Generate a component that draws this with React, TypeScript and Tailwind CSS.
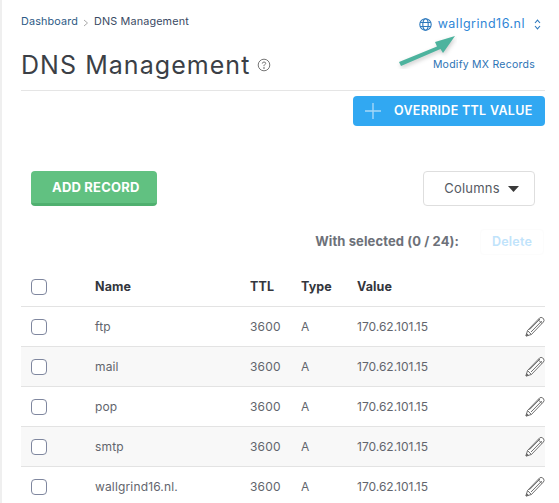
const FONT = "font-['Inter','Noto_Sans',sans-serif]";

function Pencil() {
  return (
    <svg width="20" height="21" viewBox="0 0 20 21" fill="none" stroke="#6e6e6e" strokeWidth="1" strokeLinejoin="round">
      <path d="M1 20 L2.5 14.5 L14.5 2 Q16 0.8 17.8 2 L18.6 2.9 Q19.7 4.6 18.4 6 L6.4 18.5 Z" fill="#fff" />
      <path d="M2.5 14.5 L6.4 18.5 M13 3.6 L17 7.5 M4.4 13.8 L15 3 M6 16 L16.8 5 M1.6 17.6 L3.4 19.4" />
      <path d="M1 20 L1.6 17.6 L3.4 19.4 Z" fill="#555" />
    </svg>
  );
}

function Check() {
  return <span className="block w-4 h-4 rounded-[4px] border border-[#7f879f] bg-white" />;
}

const ROWS = ["ftp", "mail", "pop", "smtp", "wallgrind16.nl."];
const GRID = "grid grid-cols-[64px_155px_51px_56px_1fr_20px] items-center pl-[10px]";

export default function App() {
  return (
    <div className={`${FONT} relative w-[559px] h-[503px] overflow-hidden bg-white`}>
      <div className="absolute left-0 top-0 bottom-0 w-[2px] bg-[#efefef]" />
      <div className="w-[524px] ml-[21px]">
        <div className="flex items-start justify-between h-[90px] border-b-0">
          <div className="pt-[15px]">
            <div className="flex items-center h-[14px] text-[10.8px] tracking-[0.15px] text-[#3a4a63]">
              <span className="text-[#2c5a85]">Dashboard</span>
              <svg width="6" height="8" viewBox="0 0 6 8" className="mx-[5px] mt-[2px]" fill="none" stroke="#aaa"><path d="M1 1 L4.5 4 L1 7" /></svg>
              <span>DNS Management</span>
            </div>
            <div className="flex items-center mt-[14px] h-[44px]">
              <h1 className="text-[25px] font-normal text-[#3b3f46] tracking-[1.05px] leading-none">DNS Management</h1>
              <svg width="14" height="14" viewBox="0 0 14 14" className="ml-[7px]" fill="none" stroke="#777" strokeWidth="1">
                <circle cx="7" cy="7" r="5.8" />
                <path d="M5.3 5.6 Q5.4 4 7 4 Q8.7 4 8.7 5.4 Q8.7 6.3 7.4 6.9 L7 7.4 V8.2" />
                <circle cx="7" cy="10" r="0.4" fill="#777" />
              </svg>
            </div>
          </div>
          <div className="flex flex-col items-end pt-[16px] pr-[4px]">
            <div className="flex items-center h-[16px] text-[#2f86d6] text-[12.5px]">
              <svg width="13" height="13" viewBox="0 0 13 13" fill="none" stroke="#2d79bd" strokeWidth="1.1" className="mr-[6px]">
                <circle cx="6.5" cy="6.5" r="5.7" />
                <ellipse cx="6.5" cy="6.5" rx="2.7" ry="5.7" />
                <path d="M1.2 4.5 H11.8 M1.2 8.5 H11.8" />
              </svg>
              <span className="tracking-[0.5px]">wallgrind16.nl</span>
              <svg width="7" height="11" viewBox="0 0 7 11" fill="none" stroke="#2d79bd" strokeWidth="1.1" className="ml-[9px]">
                <path d="M1 4 L3.5 1.2 L6 4 M1 7 L3.5 9.8 L6 7" />
              </svg>
            </div>
            <span className="mt-[26px] mr-[6px] text-[10.5px] leading-[14px] text-[#2c73b5] tracking-[0.25px]">Modify MX Records</span>
          </div>
        </div>
        <div className="h-px bg-[#e5e5e5]" />
        <div className="flex justify-end mt-[5px]">
          <button className="w-[192px] h-[30px] rounded-[4px] bg-[#31a8f2] text-white flex items-center pl-[11px]">
            <svg width="18" height="18" viewBox="0 0 18 18" stroke="#a6d8f8" strokeWidth="1.4"><path d="M9 1 V17 M1 9 H17" /></svg>
            <span className="ml-[12px] text-[12.5px] font-semibold tracking-[0.3px]">OVERRIDE TTL VALUE</span>
          </button>
        </div>
        <div className="flex items-start justify-between mt-[45px] pl-[10px] pr-[10px]">
          <button className="w-[126px] h-[35px] pt-[2px] pl-[21px] rounded-[4px] bg-[#61c181] border-b-[3px] border-[#4fb06f] text-white text-[13px] font-bold tracking-[0.2px] text-left">
            ADD RECORD
          </button>
          <button className="w-[112px] h-[35px] pl-[5px] rounded-[4px] border border-[#dedede] bg-white flex items-center justify-center text-[13px] text-[#555a63]">
            <span className="tracking-[0.2px]">Columns</span>
            <svg width="11" height="6" viewBox="0 0 11 6" className="ml-[8px]" fill="#3a3a3a"><path d="M0 0 H11 L5.5 6 Z" /></svg>
          </button>
        </div>
        <div className="flex items-center justify-end mt-[22px] h-[28px]">
          <span className="text-[13px] font-bold text-[#6d7179] tracking-[0.1px]">With selected (0 / 24):</span>
          <button className="ml-[21px] w-[64px] h-[26px] mr-[1px] rounded-[4px] border border-[#fcfcfc] text-[12.5px] font-semibold text-[#c0e3fb] text-center tracking-[0.2px]">Delete</button>
        </div>
        <div className={`${GRID} h-[39px] mt-[11px] text-[12.5px] font-bold text-[#33363d] tracking-[0.1px]`}>
          <Check />
          <span className="pt-[1px]">Name</span>
          <span className="pt-[1px]">TTL</span>
          <span className="pt-[1px]">Type</span>
          <span className="pt-[1px]">Value</span>
          <span />
        </div>
        {ROWS.map((name, i) => (
          <div key={name} className={`${GRID} h-[40px] border-t border-[#e3e3e3] text-[12px] text-[#62656d] ${i % 2 === 1 ? "bg-[#f8f8f8]" : "bg-white"}`}>
            <Check />
            <span className="pt-[1px] tracking-[0.15px]">{name}</span>
            <span className="pt-[1px] tracking-[0.2px]">3600</span>
            <span className="pt-[1px]">A</span>
            <span className="pt-[1px]">170.62.101.15</span>
            <Pencil />
          </div>
        ))}
      </div>
      <svg width="60" height="36" viewBox="0 0 60 36" className="absolute left-[397px] top-[33px] pointer-events-none" fill="#4db39e">
        <path d="M2 29 L40 13.5 L38 9 L58 3 L46 20 L43.5 16 L4 33 Z" style={{ filter: "drop-shadow(1px 2px 2px rgba(0,0,0,0.2))" }} />
      </svg>
    </div>
  );
}
